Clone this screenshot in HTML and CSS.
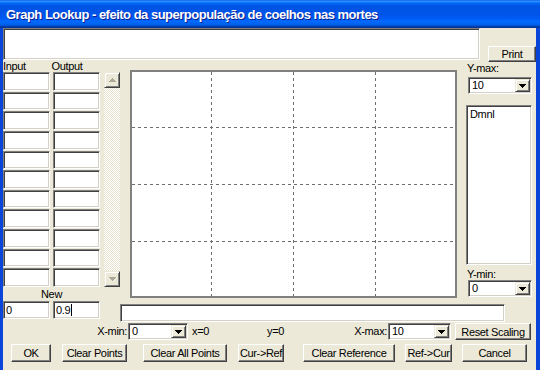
FILE: index.html
```html
<!DOCTYPE html>
<html>
 <head>
  <meta charset="UTF-8">
  <title>Graph Lookup</title>
  <link rel="stylesheet" href="styles.css">
 </head>
 <body>
 <div class="window">
	<div class="titlebar">Graph Lookup - efeito da superpopulação de coelhos nas mortes</div>
	<div class="client">
		<div class="toprow">
			<div class="field comment"></div>
			<button class="btn print">Print</button>
		</div>
		<div class="main">
			<div class="tablecol">
				<div class="heads"><span>Input</span><span>Output</span></div>
				<div class="cells">
					<div class="field"></div><div class="field"></div>
					<div class="field"></div><div class="field"></div>
					<div class="field"></div><div class="field"></div>
					<div class="field"></div><div class="field"></div>
					<div class="field"></div><div class="field"></div>
					<div class="field"></div><div class="field"></div>
					<div class="field"></div><div class="field"></div>
					<div class="field"></div><div class="field"></div>
					<div class="field"></div><div class="field"></div>
					<div class="field"></div><div class="field"></div>
					<div class="field"></div><div class="field"></div>
				</div>
				<div class="newlabel">New</div>
				<div class="newrow">
					<div class="field">0</div>
					<div class="field">0.9<span class="caret"></span></div>
				</div>
			</div>
			<div class="scroll">
				<div class="sbtn"><svg width="7" height="4" shape-rendering="crispEdges"><path d="M3 0h1v1h1v1h1v1h1v1h-7v-1h1v-1h1v-1h1z"/></svg></div>
				<div class="track"></div>
				<div class="sbtn"><svg width="7" height="4" shape-rendering="crispEdges"><path d="M0 0h7v1h-1v1h-1v1h-1v1h-1v-1h-1v-1h-1v-1h-1z"/></svg></div>
			</div>
			<div class="graphcol">
				<div class="graphrow">
					<div class="graph">
						<svg width="323" height="224" shape-rendering="crispEdges">
							<g stroke="#6e6e6e" stroke-width="1" stroke-dasharray="3 3">
								<line x1="79.5" y1="0" x2="79.5" y2="224"/>
								<line x1="161.5" y1="0" x2="161.5" y2="224"/>
								<line x1="243.5" y1="0" x2="243.5" y2="224"/>
								<line x1="0" y1="55.5" x2="323" y2="55.5"/>
								<line x1="0" y1="112.5" x2="323" y2="112.5"/>
								<line x1="0" y1="169.5" x2="323" y2="169.5"/>
							</g>
						</svg>
					</div>
					<div class="side">
						<div class="ylabel">Y-max:</div>
						<div class="field combo"><span class="val">10</span><span class="drop"><svg width="7" height="4" shape-rendering="crispEdges"><path d="M0 0h7v1h-1v1h-1v1h-1v1h-1v-1h-1v-1h-1v-1h-1z"/></svg></span></div>
						<div class="field units">Dmnl</div>
						<div class="ylabel ymin">Y-min:</div>
						<div class="field combo"><span class="val">0</span><span class="drop"><svg width="7" height="4" shape-rendering="crispEdges"><path d="M0 0h7v1h-1v1h-1v1h-1v1h-1v-1h-1v-1h-1v-1h-1z"/></svg></span></div>
					</div>
				</div>
				<div class="field eqn"></div>
			</div>
		</div>
		<div class="axisrow">
			<span class="xminlabel">X-min:</span>
			<div class="field combo xmin"><span class="val">0</span><span class="drop"><svg width="7" height="4" shape-rendering="crispEdges"><path d="M0 0h7v1h-1v1h-1v1h-1v1h-1v-1h-1v-1h-1v-1h-1z"/></svg></span></div>
			<span class="xval">x=0</span>
			<span class="yval">y=0</span>
			<span class="xmaxlabel">X-max:</span>
			<div class="field combo xmax"><span class="val">10</span><span class="drop"><svg width="7" height="4" shape-rendering="crispEdges"><path d="M0 0h7v1h-1v1h-1v1h-1v1h-1v-1h-1v-1h-1v-1h-1z"/></svg></span></div>
			<button class="btn reset">Reset Scaling</button>
		</div>
		<div class="btnrow">
			<button class="btn b-ok">OK</button>
			<button class="btn b-clear">Clear Points</button>
			<button class="btn b-clearall">Clear All Points</button>
			<button class="btn b-curref">Cur-&gt;Ref</button>
			<button class="btn b-clearref">Clear Reference</button>
			<button class="btn b-refcur">Ref-&gt;Cur</button>
			<button class="btn b-cancel">Cancel</button>
		</div>
	</div>
 </div>
 </body>
</html>
```

FILE: styles.css
```css
html,body{
	margin: 0;
	padding: 0;
}
body{
	width: 540px;
	height: 370px;
	overflow: hidden;
	font-family: "Liberation Sans", Arial, sans-serif;
	font-size: 11px;
	letter-spacing: -0.35px;
	color: #000;
	background: #ece9d8;
}
.window{
	width: 540px;
	height: 370px;
	display: flex;
	flex-direction: column;
}
.titlebar{
	height: 28px;
	flex: none;
	box-sizing: border-box;
	padding-left: 6px;
	display: flex;
	align-items: center;
	color: #fff;
	font-size: 13px;
	font-weight: bold;
	letter-spacing: -0.5px;
	text-shadow: 1px 1px #0a1f8f;
	background: linear-gradient(to bottom, #0058ee 0%, #3593ff 4%, #288eff 6%, #127dff 8%, #036ffc 10%, #0262ee 14%, #0057e5 20%, #0054e3 24%, #0055eb 56%, #005bf5 66%, #026afe 76%, #0062ef 86%, #0052d6 92%, #0040ab 94%, #003092 100%);
}
.client{
	flex: 1;
	display: flex;
	flex-direction: column;
	border-left: 3px solid #0a45d9;
	border-right: 4px solid #0a45d9;
}

/* sunken edit box */
.field{
	box-sizing: border-box;
	background: #fff;
	border: 1px solid;
	border-color: #808080 #fff #fff #808080;
	box-shadow: inset 1px 1px #404040, inset -1px -1px #d4d0c8;
	padding: 0 3px;
	line-height: 16px;
	white-space: nowrap;
}
.btn{
	box-sizing: border-box;
	margin: 0;
	padding: 0;
	height: 18px;
	font: inherit;
	letter-spacing: inherit;
	color: #000;
	background: #ece9d8;
	border: 1px solid;
	border-color: #fff #404040 #404040 #fff;
	box-shadow: inset -1px -1px #808080;
	display: flex;
	align-items: center;
	justify-content: center;
}

.toprow{
	height: 32px;
	flex: none;
	display: flex;
}
.comment{
	width: 477px;
	height: 32px;
}
.print{
	width: 48px;
	height: 16px;
	margin: 18px 0 0 8px;
}

.main{
	display: flex;
	flex: none;
}
.tablecol{
	width: 97px;
}
.heads{
	height: 12px;
	line-height: 12px;
	display: flex;
}
.heads span{
	width: 50px;
}
.cells{
	height: 215px;
	display: grid;
	grid-template-columns: 47px 47px;
	grid-template-rows: repeat(11, 1fr);
	column-gap: 3px;
	row-gap: 1px;
}
.newlabel{
	height: 14px;
	line-height: 15px;
	text-align: center;
}
.newrow{
	display: flex;
	gap: 3px;
}
.newrow .field{
	width: 47px;
	height: 18px;
	padding-left: 2px;
}
.caret{
	display: inline-block;
	width: 1px;
	height: 12px;
	margin-left: 1px;
	vertical-align: -2px;
	background: #000;
}

.scroll{
	width: 16px;
	height: 215px;
	margin: 12px 0 0 4px;
	display: flex;
	flex-direction: column;
}
.sbtn{
	height: 16px;
	box-sizing: border-box;
	background: #ece9d8;
	border: 1px solid;
	border-color: #ece9d8 #404040 #404040 #ece9d8;
	box-shadow: inset 1px 1px #fff, inset -1px -1px #808080;
	display: flex;
	align-items: center;
	justify-content: center;
}
.sbtn svg{
	fill: #aca899;
}
.track{
	flex: 1;
	background: repeating-conic-gradient(#fff 0 25%, #e6e2cf 0 50%) 0 0 / 2px 2px;
}

.graphcol{
	flex: 1;
	display: flex;
	flex-direction: column;
}
.graphrow{
	height: 238px;
	display: flex;
}
.graph{
	width: 327px;
	height: 228px;
	box-sizing: border-box;
	margin: 10px 0 0 10px;
	border: 2px solid #808080;
	background: #fff;
}
.graph svg{
	display: block;
}
.side{
	width: 66px;
	margin-left: 9px;
	display: flex;
	flex-direction: column;
}
.ylabel{
	height: 17px;
	box-sizing: border-box;
	padding: 2px 0 0 1px;
	line-height: 13px;
}
.ylabel.ymin{
	height: 15px;
	padding-top: 3px;
}
.combo{
	height: 17px;
	display: flex;
	padding: 1px;
	line-height: 13px;
}
.side .combo{
	width: 64px;
	margin-left: 2px;
}
.combo .val{
	flex: 1;
	padding-left: 2px;
}
.drop{
	width: 15px;
	height: 13px;
	box-sizing: border-box;
	background: #ece9d8;
	border: 1px solid;
	border-color: #ece9d8 #404040 #404040 #ece9d8;
	box-shadow: inset 1px 1px #fff, inset -1px -1px #808080;
	display: flex;
	align-items: center;
	justify-content: center;
}
.units{
	height: 160px;
	margin-top: 11px;
	padding: 2px 3px;
	line-height: 13px;
}
.eqn{
	width: 385px;
	height: 18px;
	margin-top: 6px;
}

.axisrow{
	height: 18px;
	flex: none;
	display: flex;
	align-items: flex-start;
	line-height: 18px;
}
.axisrow .combo{
	margin-top: 1px;
}
.xminlabel{
	width: 124px;
	text-align: right;
}
.xmin{
	width: 60px;
	margin-left: 1px;
}
.xval{
	width: 75px;
	margin-left: 4px;
}
.yval{
	width: 50px;
}
.xmaxlabel{
	width: 70px;
	text-align: right;
}
.xmax{
	width: 63px;
	margin-left: 1px;
}
.reset{
	width: 76px;
	height: 17px;
	margin: 1px 0 0 4px;
}

.btnrow{
	display: flex;
	margin-top: 4px;
}
.b-ok{ width: 40px; margin-left: 8px; }
.b-clear{ width: 65px; margin-left: 11px; }
.b-clearall{ width: 84px; margin-left: 16px; }
.b-curref{ width: 46px; margin-left: 11px; }
.b-clearref{ width: 92px; margin-left: 19px; }
.b-refcur{ width: 47px; margin-left: 10px; }
.b-cancel{ width: 65px; margin-left: 10px; }
```
